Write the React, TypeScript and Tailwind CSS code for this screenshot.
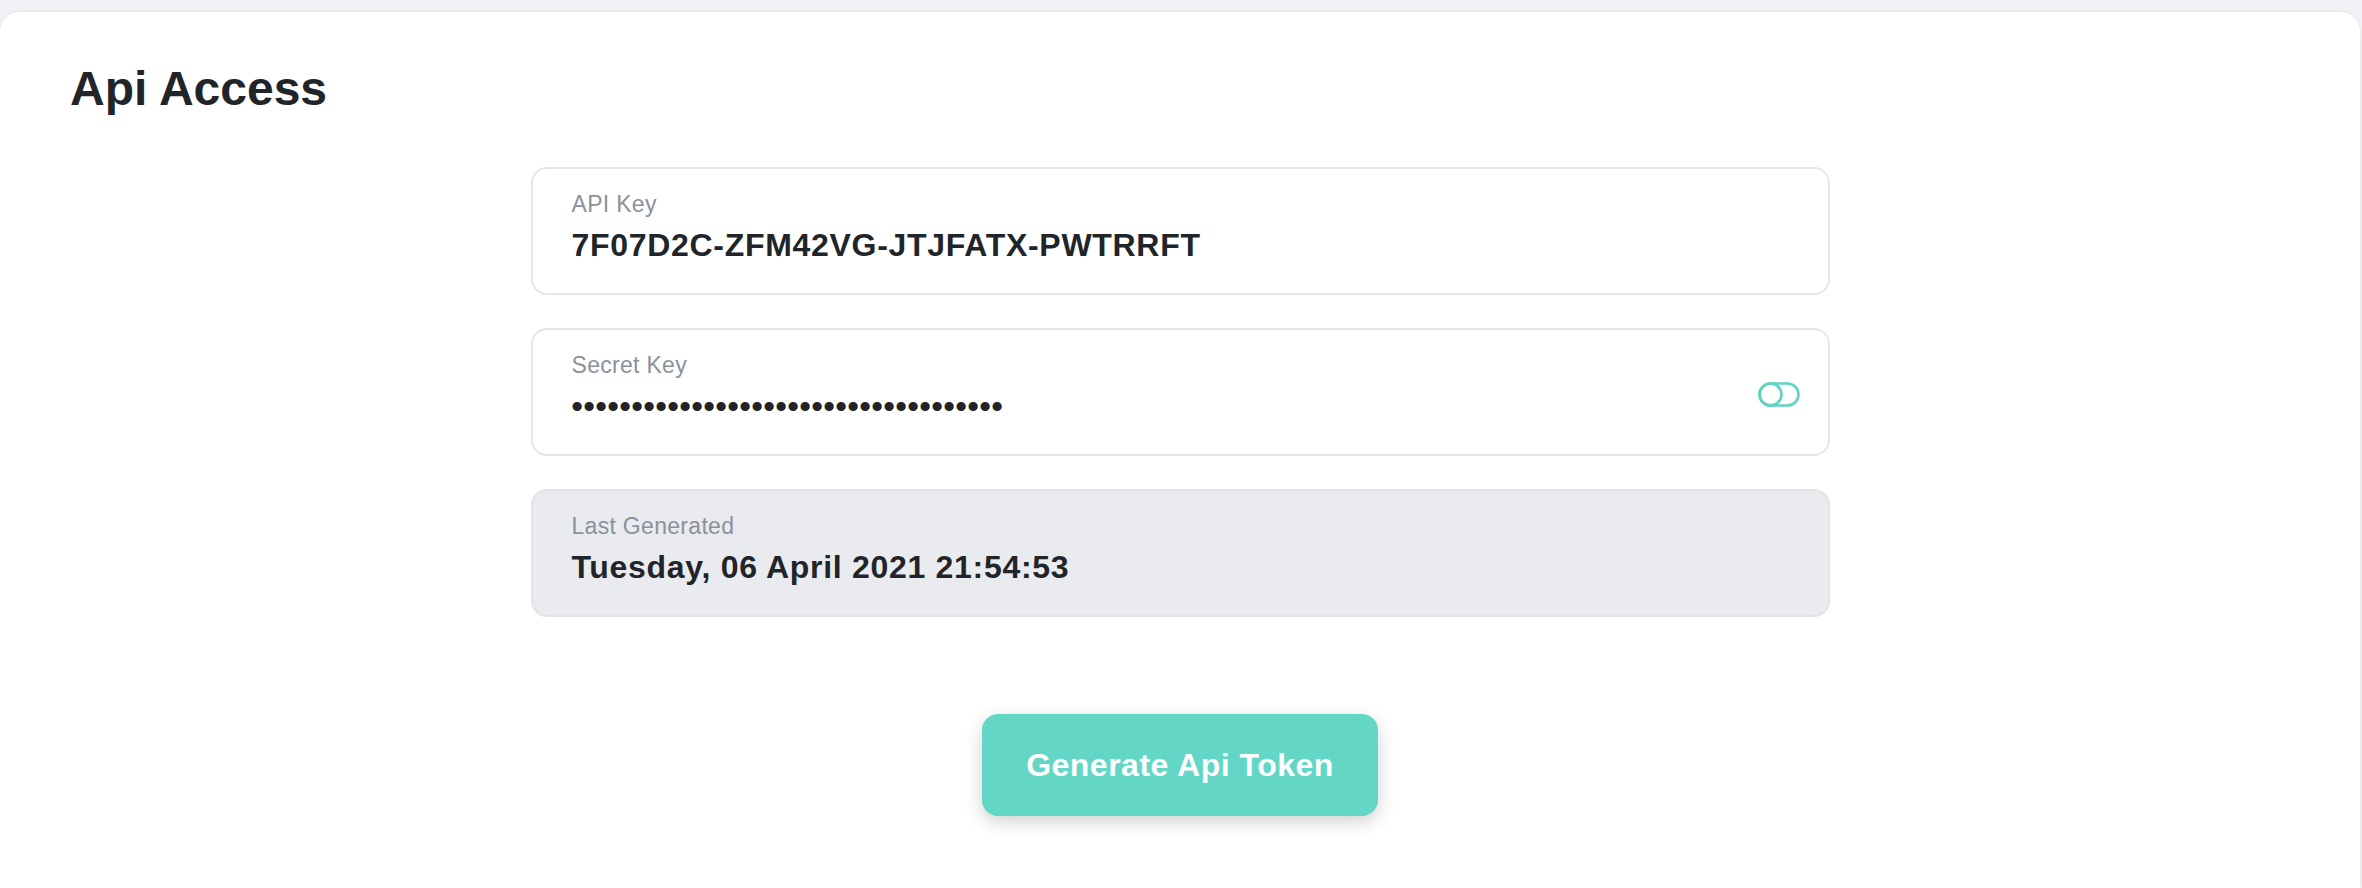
import { ReactNode } from 'react';

const DOTS = '•'.repeat(36);

function ToggleIcon() {
  return (
    <svg width="42" height="25" viewBox="0 0 42 25" fill="none" stroke="#5fd4c2" strokeWidth={2.6}>
      <rect x="1.5" y="1.5" width="39" height="22" rx="11" />
      <circle cx="12.5" cy="12.5" r="11" />
    </svg>
  );
}

function Field({ label, children, muted, right }: { label: string; children: ReactNode; muted?: boolean; right?: ReactNode }) {
  return (
    <div
      className={`flex items-center justify-between rounded-[16px] border-2 pl-[39px] pr-[28px] ${
        muted ? 'bg-[#e9ebee] border-[#e2e4e7]' : 'bg-white border-[#e6e6e6]'
      }`}
    >
      <div className="pt-[22px] pb-[28px]">
        <p className="text-[23px] leading-[26px] tracking-[0.3px] text-[#8a929b]">{label}</p>
        <p className="mt-[8px] text-[32px] leading-[40px] font-bold tracking-[0.7px] text-[#212529]">{children}</p>
      </div>
      {right && <div className="mt-[5px]">{right}</div>}
    </div>
  );
}

export default function App() {
  return (
    <div className="h-screen overflow-hidden bg-[#f1f2f6] pt-3 font-['Liberation_Sans',Arial,sans-serif]">
      <div className="mr-[2px] h-full rounded-t-[20px] bg-white pt-[49px] shadow-[0_0_4px_rgba(0,0,0,0.08)]">
        <h1 className="pl-[70px] text-[48px] leading-[56px] font-bold text-[#212529]">Api Access</h1>

        <div className="mx-auto mt-[50px] flex w-[1299px] flex-col gap-[33px]">
          <Field label="API Key">7F07D2C-ZFM42VG-JTJFATX-PWTRRFT</Field>
          <Field label="Secret Key" right={<ToggleIcon />}>
            <span className="tracking-[0.8px]">{DOTS}</span>
          </Field>
          <Field label="Last Generated" muted>
            Tuesday, 06 April 2021 21:54:53
          </Field>
        </div>

        <div className="mt-[97px] flex justify-center">
          <button className="h-[102px] w-[396px] rounded-[16px] bg-[#63d6c5] text-[32px] font-bold tracking-[0.5px] text-white shadow-[0_6px_18px_rgba(0,0,0,0.18)]">
            Generate Api Token
          </button>
        </div>
      </div>
    </div>
  );
}
